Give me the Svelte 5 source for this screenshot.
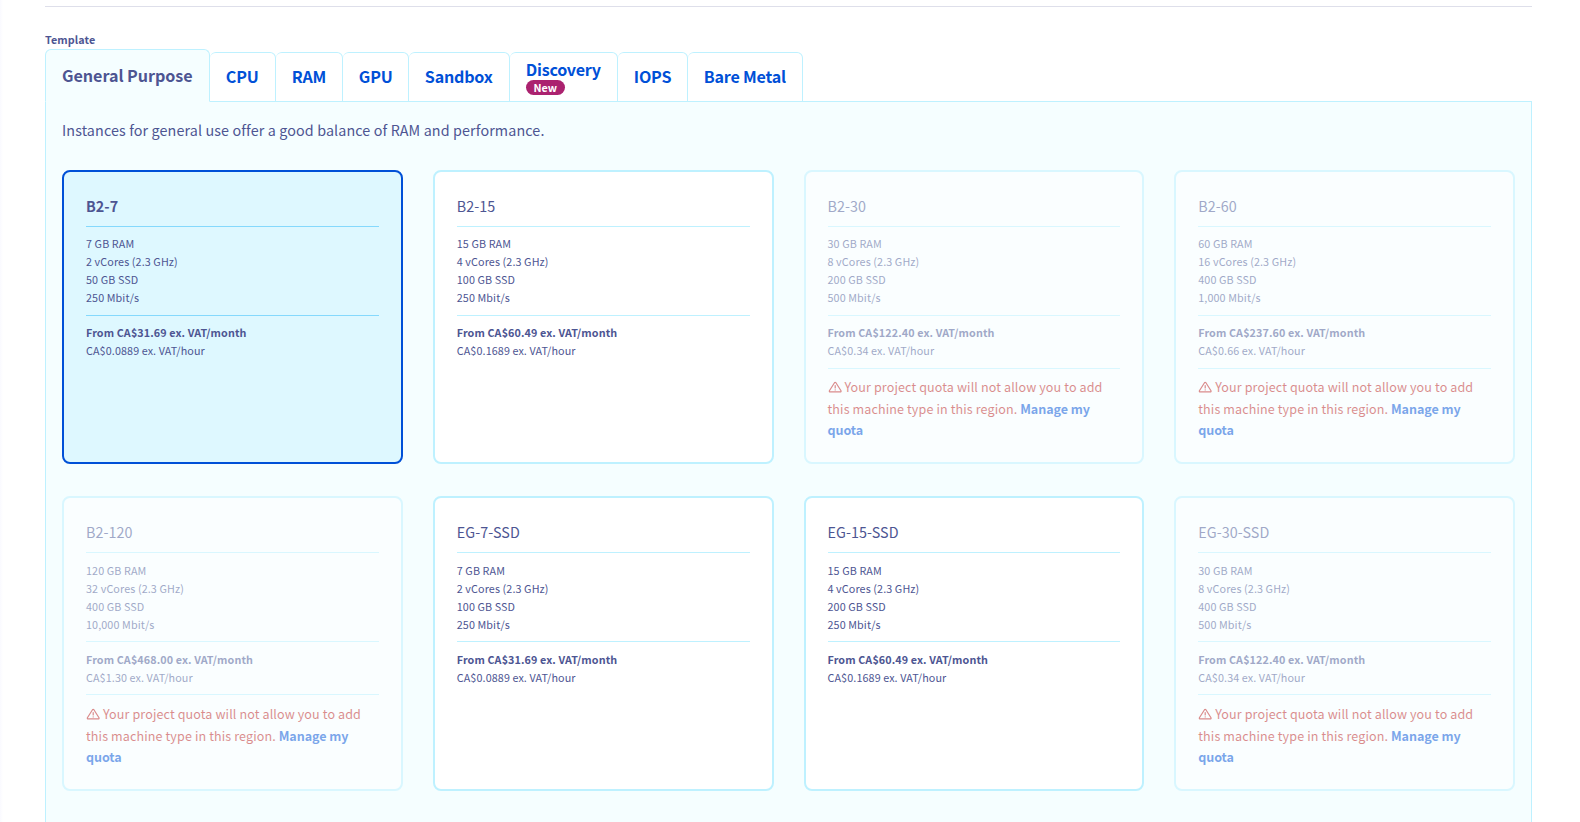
<script>
  const tabs = [
    { name: 'General Purpose', width: 165, active: true },
    { name: 'CPU', width: 66 },
    { name: 'RAM', width: 67 },
    { name: 'GPU', width: 66 },
    { name: 'Sandbox', width: 101 },
    { name: 'Discovery', width: 108, isNew: true },
    { name: 'IOPS', width: 70 },
    { name: 'Bare Metal', width: 115 },
  ];

  const models = [
    { name: 'B2-7', specs: ['7 GB RAM', '2 vCores (2.3 GHz)', '50 GB SSD', '250 Mbit/s'], month: '31.69', hour: '0.0889', selected: true },
    { name: 'B2-15', specs: ['15 GB RAM', '4 vCores (2.3 GHz)', '100 GB SSD', '250 Mbit/s'], month: '60.49', hour: '0.1689' },
    { name: 'B2-30', specs: ['30 GB RAM', '8 vCores (2.3 GHz)', '200 GB SSD', '500 Mbit/s'], month: '122.40', hour: '0.34', disabled: true },
    { name: 'B2-60', specs: ['60 GB RAM', '16 vCores (2.3 GHz)', '400 GB SSD', '1,000 Mbit/s'], month: '237.60', hour: '0.66', disabled: true },
    { name: 'B2-120', specs: ['120 GB RAM', '32 vCores (2.3 GHz)', '400 GB SSD', '10,000 Mbit/s'], month: '468.00', hour: '1.30', disabled: true },
    { name: 'EG-7-SSD', specs: ['7 GB RAM', '2 vCores (2.3 GHz)', '100 GB SSD', '250 Mbit/s'], month: '31.69', hour: '0.0889' },
    { name: 'EG-15-SSD', specs: ['15 GB RAM', '4 vCores (2.3 GHz)', '200 GB SSD', '250 Mbit/s'], month: '60.49', hour: '0.1689' },
    { name: 'EG-30-SSD', specs: ['30 GB RAM', '8 vCores (2.3 GHz)', '400 GB SSD', '500 Mbit/s'], month: '122.40', hour: '0.34', disabled: true },
  ];
</script>

<main>
  <hr class="divider" />
  <div class="label">Template</div>
  <div class="tabs">
    {#each tabs as tab}
      <div class="tab" class:active={tab.active} class:stacked={tab.isNew} style="width: {tab.width}px">
        <span class="name">{tab.name}</span>
        {#if tab.isNew}<span class="badge">New</span>{/if}
      </div>
    {/each}
  </div>
  <section class="panel">
    <p class="intro">Instances for general use offer a good balance of RAM and performance.</p>
    <div class="grid">
      {#each models as m}
        <article class="card" class:selected={m.selected} class:disabled={m.disabled}>
          <h3>{m.name}</h3>
          <ul>
            {#each m.specs as s}<li>{s}</li>{/each}
          </ul>
          <div class="price">
            <strong>From CA${m.month} ex. VAT/month</strong>
            <span>CA${m.hour} ex. VAT/hour</span>
          </div>
          {#if m.disabled}
            <div class="warn">
              <span class="first">
                <svg width="14" height="12" viewBox="0 0 14 12" fill="none" stroke="currentColor" stroke-width="1.2" stroke-linejoin="round" stroke-linecap="round"><path d="M6.5 1.7 1.4 9.8Q1 10.9 2.2 10.9H12.2Q13.4 10.9 13 9.8L7.9 1.7Q7.2 .9 6.5 1.7Z" /><path d="M7.2 4.6V7M7.2 8.8V8.9" /></svg>
                Your project quota will not allow you to add
              </span>
              this machine type in this region. <b>Manage my<br />quota</b>
            </div>
          {/if}
        </article>
      {/each}
    </div>
  </section>
</main>

<style>
  :global(body) {
    margin: 0;
    background: #fff;
    overflow: hidden;
  }
  main {
    box-sizing: border-box;
    height: 822px;
    overflow: hidden;
    padding: 6px 48px 0 45px;
    background: linear-gradient(90deg, #fafaff 0, #fff 3px);
    color: #4d5592;
    font-family: 'Noto Sans CJK SC', 'Noto Sans', sans-serif;
    font-size: 14.33px;
  }
  .divider {
    height: 1px;
    margin: 0;
    border: 0;
    background: #dedfea;
  }
  .label {
    height: 18px;
    margin-top: 24px;
    font-size: 10.75px;
    line-height: 18px;
    font-weight: 700;
    letter-spacing: 0.12px;
  }
  .tabs {
    display: flex;
    align-items: flex-end;
    height: 53px;
    margin-bottom: -1px;
    position: relative;
    z-index: 1;
  }
  .tab {
    box-sizing: border-box;
    flex: none;
    height: 50px;
    padding-left: 15.8px;
    border: 1px solid #bef1ff;
    border-left-width: 0;
    border-radius: 6px 6px 0 0;
    background: #fff;
    color: #0050d7;
    font-size: 16.1px;
    line-height: 46px;
    font-weight: 700;
    letter-spacing: -0.21px;
    white-space: nowrap;
  }
  .tab.active {
    height: 53px;
    padding-left: 16px;
    border-left-width: 1px;
    border-bottom-color: #f5feff;
    background: #f5feff;
    color: #4d5592;
    line-height: 51px;
    letter-spacing: -0.03px;
  }
  .tab.stacked {
    display: flex;
    flex-direction: column;
    align-items: flex-start;
    padding-top: 5px;
  }
  .stacked .name {
    line-height: 22px;
    letter-spacing: -0.25px;
  }
  .badge {
    width: 39px;
    height: 15px;
    border-radius: 8px;
    background: #ab226f;
    color: #fff;
    font-size: 10.75px;
    line-height: 15px;
    letter-spacing: 0;
    text-align: center;
  }
  .panel {
    height: 740px;
    padding: 16px 16px 0;
    border: 1px solid #bef1ff;
    background: #f5feff;
  }
  .intro {
    height: 52px;
    margin: 0;
    line-height: 24px;
    letter-spacing: 0.115px;
  }
  .grid {
    display: grid;
    grid-template-columns: repeat(4, 1fr);
    grid-auto-rows: 294.4px;
    column-gap: 30px;
    row-gap: 32px;
  }
  .card {
    box-sizing: border-box;
    padding: 22px;
    border: 2px solid #bef1ff;
    border-radius: 8px;
    background: #fff;
    font-size: 10.75px;
    line-height: 18px;
    letter-spacing: 0.115px;
    white-space: nowrap;
  }
  .card > :not(h3) {
    margin: 0;
    padding: 8.3px 0 7.7px;
    border-top: 1px solid #bef1ff;
  }
  h3 {
    height: 32px;
    margin: 0;
    font-size: 14.33px;
    line-height: 23px;
    letter-spacing: 0.05px;
    font-weight: 400;
  }
  ul {
    list-style: none;
  }
  .price strong,
  .price span {
    display: block;
  }
  .selected {
    border-color: #0050d7;
    background: #def8ff;
  }
  .card.selected > :not(h3) {
    border-color: #85d9fd;
  }
  .selected h3 {
    font-weight: 700;
  }
  .disabled {
    opacity: 0.5;
  }
  .card > .warn:not(h3) {
    padding-top: 7.5px;
    color: #c11b1b;
    font-size: 12.54px;
    line-height: 21px;
    letter-spacing: 0.12px;
  }
  .first {
    display: block;
    margin-bottom: 1px;
  }
  .warn svg {
    vertical-align: -1px;
  }
  .warn b {
    color: #0050d7;
    letter-spacing: -0.06px;
  }
</style>
